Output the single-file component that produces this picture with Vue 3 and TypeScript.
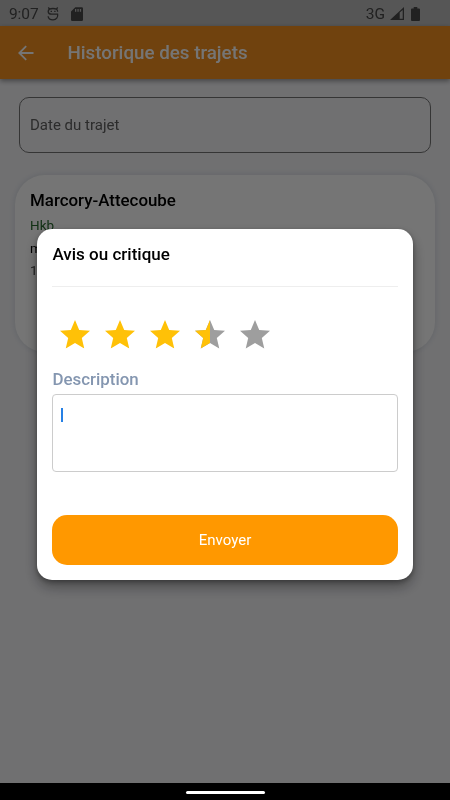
<script setup lang="ts">
import { ref } from 'vue'

const rating = ref(3.5)
const description = ref('')
const starPath = 'M12 17.27L18.18 21l-1.64-7.03L22 9.24l-7.19-.61L12 2 9.19 8.63 2 9.24l5.46 4.73L5.82 21z'

function fill(n: number): number {
  return Math.max(0, Math.min(1, rating.value - n + 1)) * 20
}
</script>

<template>
  <div class="phone">
    <div class="page">
      <div class="status">
        <span class="time">9:07</span>
        <svg class="face" width="12" height="14" viewBox="0 0 12 14" fill="none" stroke="#484848" stroke-width="1.3">
          <path d="M10.6 4.8C10.8 2.5 9 1.5 6 1.5S1.2 2.6 1.2 4.6C1.2 6.6 2.6 7.2 4.6 7.2H10.6C11.3 10.4 9.3 12.8 6 12.8C3 12.8 1.3 11.1 1.1 9.2M2.4 2.2L1.4.4M9.6 2.2L10.6.4" />
          <path d="M3.6 4.4H5M7.2 4.4H8.6" />
        </svg>
        <svg class="sd" width="12" height="14" viewBox="0 0 12 14">
          <path fill="#484848" fill-rule="evenodd" d="M4.3.2H10.7Q12 .2 12 1.5V12.7Q12 14 10.7 14H1.3Q0 14 0 12.7V4.5ZM4 2V4.8H5.3V2ZM6.4 2V4.8H7.7V2ZM8.8 2V4.8H10.1V2Z" />
        </svg>
        <span class="net">3G</span>
        <svg class="signal" width="14" height="13" viewBox="0 0 14 13">
          <path fill="#484848" fill-rule="evenodd" d="M14 0V13H0ZM9.7 5.6V11.8H12.7V2.9Z" />
        </svg>
        <svg class="battery" width="9" height="14" viewBox="0 0 9 14">
          <path fill="#484848" d="M2.7 0H6.3V1.5H8Q9 1.5 9 2.5V13Q9 14 8 14H1Q0 14 0 13V2.5Q0 1.5 1 1.5H2.7Z" />
        </svg>
      </div>
      <header class="appbar">
        <svg width="16" height="16" viewBox="0 0 16 16" fill="none" stroke="#fff" stroke-width="1.8">
          <path d="M15.5 8H1.5M8.2 1.1L1.3 8L8.2 14.9" />
        </svg>
        <h1>Historique des trajets</h1>
      </header>
      <main>
        <div class="date">Date du trajet</div>
        <section class="card">
          <h2>Marcory-Attecoube</h2>
          <p class="green">Hkb</p>
          <p class="strong">m</p>
          <p class="sub">1</p>
        </section>
      </main>
    </div>

    <div class="scrim">
      <div class="dialog">
        <h3>Avis ou critique</h3>
        <div class="rule"></div>
        <div class="stars">
          <svg v-for="n in 5" :key="n" width="30" height="28.5" viewBox="2 2 20 19" @click="rating = n">
            <defs>
              <clipPath :id="`star-${n}`"><rect x="2" y="2" :width="fill(n)" height="19" /></clipPath>
            </defs>
            <path v-if="fill(n) < 20" :d="starPath" fill="#9e9e9e" />
            <path :d="starPath" fill="#ffc107" :clip-path="`url(#star-${n})`" />
          </svg>
        </div>
        <label>Description</label>
        <div class="input"><span class="caret"></span>{{ description }}</div>
        <button type="button">Envoyer</button>
      </div>
    </div>
    <nav><span class="pill"></span></nav>
  </div>
</template>

<style>
body {
  margin: 0;
}
</style>

<style scoped>
.phone {
  position: relative;
  width: 450px;
  height: 800px;
  overflow: hidden;
  display: flex;
  flex-direction: column;
  font-family: Roboto, "Liberation Sans", sans-serif;
}
.page {
  flex: 1;
  background: #f4f4f7;
  will-change: transform;
}
h1, h2, h3, p {
  margin: 0;
}
.status {
  height: 26px;
  box-sizing: border-box;
  background: #bcbcbc;
  color: #484848;
  display: flex;
  align-items: center;
  padding: 1px 30px 0 9px;
  font-size: 16px;
}
.time {
  width: 38px;
  font-size: 15.5px;
  letter-spacing: -0.1px;
}
.sd {
  margin-left: 12px;
}
.net {
  margin-left: auto;
  font-size: 15.5px;
}
.signal {
  margin-left: 5px;
}
.battery {
  margin-left: 7px;
}
.appbar {
  position: relative;
  height: 53px;
  background: #f49120;
  box-shadow: 0 2px 5px rgba(0, 0, 0, 0.4);
  display: flex;
  align-items: center;
  padding-left: 18px;
  color: #fff;
}
h1 {
  margin-left: 33.5px;
  font-size: 18.8px;
  font-weight: 500;
}
main {
  padding: 18px 15px 0;
}
.date {
  margin: 0 4px;
  height: 56px;
  box-sizing: border-box;
  border: 1px solid #757575;
  border-radius: 10px;
  padding-left: 10px;
  display: flex;
  align-items: center;
  font-size: 15px;
  color: #606060;
}
.card {
  margin-top: 22px;
  height: 177px;
  box-sizing: border-box;
  padding: 15px 15px 0;
  background: #fff;
  border-radius: 30px;
  box-shadow: 0 0 6px rgba(100, 125, 145, 0.22);
}
h2 {
  font-size: 16.9px;
  line-height: 20px;
  font-weight: 500;
  color: #000;
  margin-bottom: 4px;
}
.card p {
  font-size: 13.5px;
  line-height: 22.5px;
}
.green {
  color: #286b2e;
}
.card .strong {
  color: #000;
}
.sub {
  color: #444;
}
.scrim {
  position: absolute;
  inset: 0;
  background: rgba(0, 0, 0, 0.54);
  display: flex;
  justify-content: center;
  align-items: flex-start;
}
.dialog {
  margin-top: 229px;
  width: 376px;
  height: 351px;
  box-sizing: border-box;
  padding: 15px 15px 0;
  background: #fff;
  border-radius: 15px;
  box-shadow: 0 7px 14px rgba(0, 0, 0, 0.34), 0 2px 5px rgba(0, 0, 0, 0.3);
  display: flex;
  flex-direction: column;
}
h3 {
  padding-left: 0.5px;
  font-size: 17px;
  line-height: 21px;
  font-weight: 500;
  color: #000;
}
.rule {
  height: 1px;
  margin-top: 21px;
  background: #eee;
}
.stars {
  display: flex;
  gap: 15px;
  margin: 33px 0 0 8px;
}
label {
  margin-top: 20.5px;
  padding-left: 0.5px;
  font-size: 16.9px;
  line-height: 20px;
  font-weight: 500;
  color: #8496b0;
}
.input {
  margin-top: 5px;
  height: 78px;
  box-sizing: border-box;
  border: 1px solid #ccc;
  border-radius: 4px;
  padding: 13px 8px;
}
.caret {
  display: block;
  width: 2px;
  height: 14px;
  background: #2680e5;
}
button {
  margin-top: 43px;
  height: 49.5px;
  border: 0;
  border-radius: 15px;
  background: #ff9800;
  color: #fff;
  font: 400 15px Roboto, "Liberation Sans", sans-serif;
}
nav {
  position: relative;
  height: 17px;
  background: #000;
  display: flex;
  justify-content: center;
  align-items: center;
}
.pill {
  width: 79px;
  height: 3px;
  margin-top: 2px;
  border-radius: 2px;
  background: #fff;
}
</style>
